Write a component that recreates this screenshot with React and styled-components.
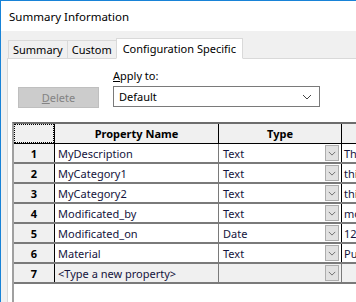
import React from 'react';
import styled, { createGlobalStyle } from 'styled-components';

const Global = createGlobalStyle`
  html, body { margin: 0; padding: 0; background: #f0f0f0; }
  body { font-family: 'Noto Sans', 'Open Sans', sans-serif; font-size: 11px; color: #000; }
`;

const Window = styled.div`
  width: 356px;
  height: 302px;
  box-sizing: border-box;
  border-top: 1px solid #1883d7;
  border-left: 1px solid #1883d7;
  background: #f0f0f0;
  overflow: hidden;
  display: flex;
  flex-direction: column;
`;

const TitleBar = styled.div`
  height: 30px;
  flex: none;
  background: #fff;
  display: flex;
  align-items: center;
  padding-left: 8px;
  font-size: 11.5px;
  color: #000;
`;

const Body = styled.div`
  flex: 1;
  padding: 7px 0 0 6px;
  display: flex;
  flex-direction: column;
  min-height: 0;
`;

const TabRow = styled.div`
  display: flex;
  align-items: flex-end;
  padding-left: 1px;
  height: 20px;
  position: relative;
  z-index: 1;
`;

const Tab = styled.div`
  height: ${p => (p.$active ? 21 : 18)}px;
  box-sizing: border-box;
  padding: 0 ${p => (p.$active ? 6 : 4)}px;
  background: ${p => (p.$active ? '#fff' : '#f0f0f0')};
  border: 1px solid #d9d9d9;
  border-bottom: ${p => (p.$active ? '1px solid #fff' : 'none')};
  margin-left: ${p => (p.$first ? 0 : -1)}px;
  margin-bottom: ${p => (p.$active ? -1 : 0)}px;
  display: flex;
  align-items: center;
  white-space: nowrap;
  color: #000;
`;

const Panel = styled.div`
  flex: 1;
  background: #fff;
  border: 1px solid #d9d9d9;
  border-right: none;
  border-bottom: none;
  display: flex;
  flex-direction: column;
  min-height: 0;
`;

const Controls = styled.div`
  display: grid;
  grid-template-columns: 81px 207px;
  grid-template-rows: 20px 21px;
  column-gap: 14px;
  padding: 7px 0 0 10px;
  height: 63px;
  box-sizing: border-box;
  flex: none;
`;

const Label = styled.div`
  grid-column: 2;
  line-height: 20px;
  color: #000;
  u { text-decoration: underline; }
`;

const Button = styled.div`
  grid-column: 1;
  height: 21px;
  box-sizing: border-box;
  background: #cccccc;
  border: 1px solid #bfbfbf;
  color: #838383;
  display: flex;
  align-items: center;
  justify-content: center;
  margin-top: 1px;
`;

const Select = styled.div`
  grid-column: 2;
  height: 21px;
  box-sizing: border-box;
  border: 1px solid #7a7a7a;
  background: #fff;
  display: flex;
  align-items: center;
  justify-content: space-between;
  padding: 0 7px 0 5px;
  color: #000;
`;

const Grid = styled.div`
  margin-left: 4px;
  flex: 1;
  border-left: 2px solid #a0a0a0;
  border-top: 2px solid #6d6d6d;
  min-height: 0;
`;

const Row = styled.div`
  display: grid;
  grid-template-columns: 40px 1px 163px 1px 122px 1px 1fr;
  height: 20px;
  border-bottom: ${p => (p.$header ? '1px solid #000' : '2px solid #7a7a7a')};
  box-sizing: border-box;
  background: ${p => (p.$gray ? '#f0f0f0' : '#fff')};
`;

const Sep = styled.div`
  background: ${p => p.$color || '#000'};
`;

const HeadCell = styled.div`
  background: #f0f0f0;
  font-weight: bold;
  display: flex;
  align-items: center;
  justify-content: center;
  color: #000;
  border: ${p => (p.$focus ? '1px dotted #000' : 'none')};
  box-sizing: border-box;
`;

const NumCell = styled(HeadCell)`
  font-size: 11px;
`;

const Cell = styled.div`
  display: flex;
  align-items: center;
  padding-left: ${p => p.$pad || 3}px;
  color: #14143c;
  white-space: nowrap;
  overflow: hidden;
  background: ${p => (p.$gray ? '#f0f0f0' : 'transparent')};
`;

const TypeCell = styled(Cell)`
  justify-content: space-between;
  padding-right: 2px;
`;

const DropBtn = styled.div`
  width: 14px;
  height: 16px;
  box-sizing: border-box;
  background: #e1e1e1;
  border: 1px solid #adadad;
  display: flex;
  align-items: center;
  justify-content: center;
`;

const Chevron = ({ size = 9, color = '#555' }) => (
  <svg width={size} height={size / 2 + 1} viewBox="0 0 10 6">
    <path d="M1 1 L5 5 L9 1" fill="none" stroke={color} strokeWidth="1" />
  </svg>
);

const rows = [
  ['MyDescription', 'Text', 'This is a description'],
  ['MyCategory1', 'Text', 'this'],
  ['MyCategory2', 'Text', 'this'],
  ['Modificated_by', 'Text', 'modified'],
  ['Modificated_on', 'Date', '12/12/2020'],
  ['Material', 'Text', 'Pure'],
];

export default function App() {
  return (
    <>
      <Global />
      <Window>
        <TitleBar>Summary Information</TitleBar>
        <Body>
          <TabRow>
            <Tab $first>Summary</Tab>
            <Tab>Custom</Tab>
            <Tab $active>Configuration Specific</Tab>
          </TabRow>
          <Panel>
            <Controls>
              <Label><u>A</u>pply to:</Label>
              <Button><u>D</u>elete</Button>
              <Select>
                Default
                <Chevron size={10} color="#444" />
              </Select>
            </Controls>
            <Grid>
              <Row $header>
                <HeadCell $focus />
                <Sep />
                <HeadCell>Property Name</HeadCell>
                <Sep />
                <HeadCell>Type</HeadCell>
                <Sep />
                <HeadCell />
              </Row>
              {rows.map(([name, type, value], i) => (
                <Row key={name}>
                  <NumCell>{i + 1}</NumCell>
                  <Sep />
                  <Cell>{name}</Cell>
                  <Sep $color="#7a7a7a" />
                  <TypeCell $pad={4}>
                    {type}
                    <DropBtn><Chevron size={8} /></DropBtn>
                  </TypeCell>
                  <Sep />
                  <Cell $pad={2}>{value}</Cell>
                </Row>
              ))}
              <Row $gray>
                <NumCell>7</NumCell>
                <Sep />
                <Cell>&lt;Type a new property&gt;</Cell>
                <Sep $color="#7a7a7a" />
                <TypeCell $pad={4}>
                  <span />
                  <DropBtn><Chevron size={8} /></DropBtn>
                </TypeCell>
                <Sep $color="#7a7a7a" />
                <Cell />
              </Row>
            </Grid>
          </Panel>
        </Body>
      </Window>
    </>
  );
}
